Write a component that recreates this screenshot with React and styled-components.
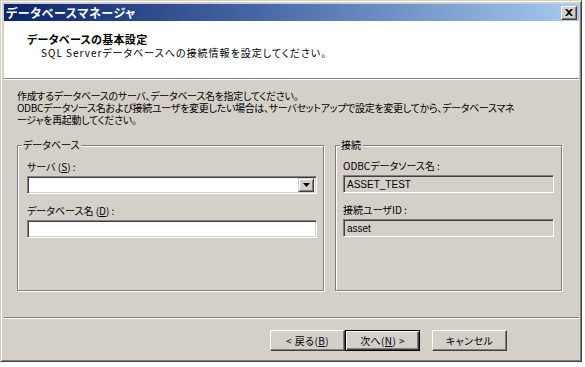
import React from 'react';
import styled, { createGlobalStyle } from 'styled-components';

const GlobalStyle = createGlobalStyle`
  html, body {
    margin: 0;
    padding: 0;
    background: #ffffff;
  }
  body {
    font-family: "Noto Sans CJK JP", "Liberation Sans", sans-serif;
    font-size: 10px;
    color: #000;
    font-feature-settings: "palt";
  }
`;

const Window = styled.div`
  width: 582px;
  height: 362px;
  box-sizing: border-box;
  background: #d4d0c8;
  border: 1px solid;
  border-color: #d4d0c8 #404040 #404040 #d4d0c8;
  box-shadow: inset 1px 1px 0 #ffffff, inset -1px -1px 0 #808080;
  padding: 3px 2px 2px 3px;
  display: flex;
  flex-direction: column;
`;

const TitleBar = styled.div`
  height: 17px;
  display: flex;
  align-items: center;
  justify-content: space-between;
  padding: 0 2px 0 2px;
  background: linear-gradient(to right, #0a246a, #4868a8 45%, #a6caf0);
`;

const TitleText = styled.span`
  color: #ffffff;
  font-size: 12px;
  font-weight: bold;
  letter-spacing: 0.6px;
  line-height: 14px;
`;

const CloseButton = styled.div`
  width: 16px;
  height: 14px;
  box-sizing: border-box;
  background: #d4d0c8;
  border: 1px solid;
  border-color: #ffffff #404040 #404040 #ffffff;
  box-shadow: inset -1px -1px 0 #808080;
  display: flex;
  align-items: center;
  justify-content: center;
`;

const Header = styled.div`
  height: 57px;
  background: #ffffff;
  padding: 11px 0 0 23px;
  box-sizing: border-box;
`;

const HeaderTitle = styled.div`
  font-size: 11px;
  font-weight: bold;
  line-height: 14px;
  letter-spacing: 0.3px;
`;

const HeaderSub = styled.div`
  font-size: 10px;
  line-height: 13px;
  padding-left: 14px;
  letter-spacing: 1px;
`;

const Separator = styled.div`
  height: 0;
  border-top: 1px solid #808080;
  border-bottom: 1px solid #ffffff;
`;

const Body = styled.div`
  flex: 1;
  padding: 10px 0 0 13px;
`;

const Description = styled.p`
  margin: 0;
  line-height: 12px;
  font-size: 10px;
  letter-spacing: -0.3px;
`;

const GroupRow = styled.div`
  display: grid;
  grid-template-columns: 307px 227px;
  column-gap: 11px;
  margin-top: 19px;
  height: 146px;
`;

const Group = styled.div`
  position: relative;
  box-sizing: border-box;
  border: 1px solid #808080;
  box-shadow: inset 1px 1px 0 #ffffff, 1px 1px 0 #ffffff;
  padding: ${(p) => p.$pad};
  display: flex;
  flex-direction: column;
`;

const Legend = styled.span`
  position: absolute;
  top: -7px;
  left: 4px;
  padding: 0 2px 0 1px;
  background: #d4d0c8;
  line-height: 12px;
`;

const FieldLabel = styled.div`
  line-height: 12px;
  margin-top: ${(p) => p.$top || 0}px;
  margin-bottom: 3px;
`;

const Sunken = styled.div`
  height: 18px;
  box-sizing: border-box;
  border: 1px solid;
  border-color: #808080 #ffffff #ffffff #808080;
  box-shadow: inset 1px 1px 0 #404040, inset -1px -1px 0 #d4d0c8;
  background: ${(p) => (p.$readOnly ? '#d4d0c8' : '#ffffff')};
  display: flex;
  align-items: center;
  justify-content: space-between;
  padding: 0 2px 0 3px;
  font-family: "Liberation Sans", sans-serif;
  font-size: 10px;
`;

const DropButton = styled.div`
  width: 16px;
  height: 14px;
  box-sizing: border-box;
  background: #d4d0c8;
  border: 1px solid;
  border-color: #d4d0c8 #404040 #404040 #d4d0c8;
  box-shadow: inset 1px 1px 0 #ffffff, inset -1px -1px 0 #808080;
  display: flex;
  align-items: center;
  justify-content: center;
`;

const ButtonRow = styled.div`
  display: flex;
  justify-content: flex-end;
  padding: 11px 72px 8px 0;
`;

const Button = styled.div`
  width: 75px;
  height: 21px;
  box-sizing: border-box;
  display: flex;
  align-items: center;
  justify-content: center;
  margin-left: ${(p) => p.$gap || 0}px;
  background: #d4d0c8;
  letter-spacing: 0.4px;
  border: 1px solid;
  border-color: ${(p) => (p.$default ? '#000000' : '#ffffff #404040 #404040 #ffffff')};
  box-shadow: ${(p) =>
    p.$default
      ? 'inset 1px 1px 0 #ffffff, inset -1px -1px 0 #404040, inset -2px -2px 0 #808080'
      : 'inset -1px -1px 0 #808080'};
`;

const Key = styled.span`
  text-decoration: underline;
`;

const Ul = ({ children }) => <Key>{children}</Key>;

export default function App() {
  return (
    <>
      <GlobalStyle />
      <Window>
        <TitleBar>
          <TitleText>データベースマネージャ</TitleText>
          <CloseButton>
            <svg width="8" height="7" viewBox="0 0 8 7">
              <path d="M0 0h2l2 2 2-2h2L5 3.5 8 7H6L4 5 2 7H0l3-3.5z" fill="#000" />
            </svg>
          </CloseButton>
        </TitleBar>
        <Header>
          <HeaderTitle>データベースの基本設定</HeaderTitle>
          <HeaderSub>SQL Serverデータベースへの接続情報を設定してください。</HeaderSub>
        </Header>
        <Separator />
        <Body>
          <Description>
            作成するデータベースのサーバ、データベース名を指定してください。
            <br />
            ODBCデータソース名および接続ユーザを変更したい場合は、サーバセットアップで設定を変更してから、データベースマネ
            <br />
            ージャを再起動してください。
          </Description>
          <GroupRow>
            <Group $pad="15px 6px 0 9px">
              <Legend>データベース</Legend>
              <FieldLabel>
                サーバ (<Ul>S</Ul>) :
              </FieldLabel>
              <Sunken>
                <span />
                <DropButton>
                  <svg width="7" height="4" viewBox="0 0 7 4">
                    <path d="M0 0h7L3.5 4z" fill="#000" />
                  </svg>
                </DropButton>
              </Sunken>
              <FieldLabel $top={11}>
                データベース名 (<Ul>D</Ul>) :
              </FieldLabel>
              <Sunken />
            </Group>
            <Group $pad="14px 7px 0 7px">
              <Legend>接続</Legend>
              <FieldLabel>ODBCデータソース名 :</FieldLabel>
              <Sunken $readOnly>ASSET_TEST</Sunken>
              <FieldLabel $top={11}>接続ユーザID :</FieldLabel>
              <Sunken $readOnly>asset</Sunken>
            </Group>
          </GroupRow>
        </Body>
        <Separator />
        <ButtonRow>
          <Button>
            &lt; 戻る(<Ul>B</Ul>)
          </Button>
          <Button $default>
            次へ(<Ul>N</Ul>) &gt;
          </Button>
          <Button $gap={12}>キャンセル</Button>
        </ButtonRow>
      </Window>
    </>
  );
}
